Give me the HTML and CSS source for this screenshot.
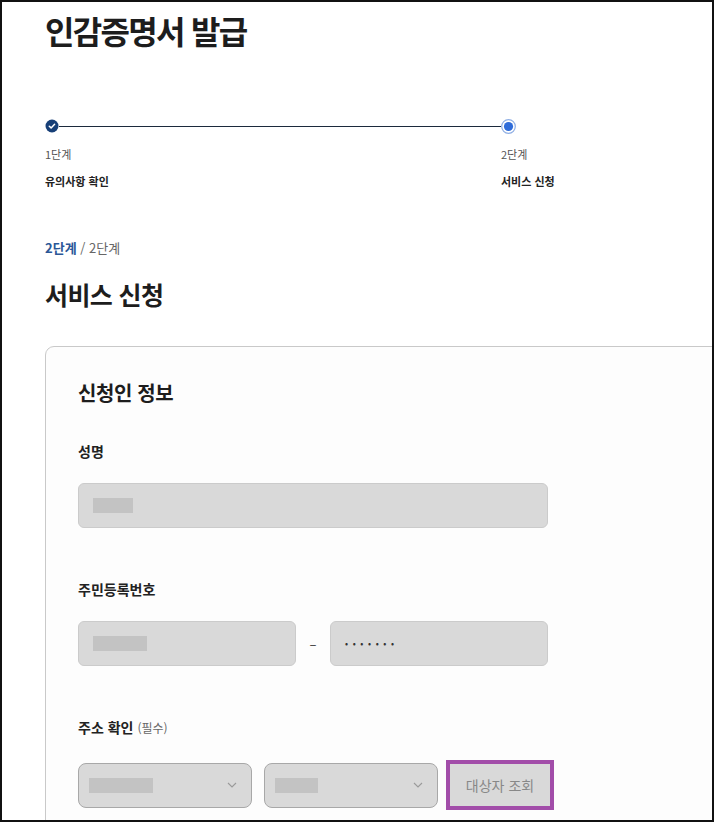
FILE: index.html
```html
<!DOCTYPE html>
<html lang="ko">
<head>
    <meta charset="UTF-8">
    <meta name="viewport" content="width=device-width, initial-scale=1.0">
    <title>인감증명서 발급</title>
    <link rel="stylesheet" href="styles.css">
</head>
<body>
    <div class="page">
        <h1 class="page-title">인감증명서 발급</h1>

        <!-- Step indicator -->
        <div class="steps">
            <div class="step done">
                <div class="step-track">
                    <svg class="dot" width="14" height="14" viewBox="0 0 14 14">
                        <circle cx="7" cy="7" r="6.5" fill="#173f77"/>
                        <path d="M4.3 7.2 L6.1 8.9 L9.6 5.3" fill="none" stroke="#fff" stroke-width="1.5" stroke-linecap="round" stroke-linejoin="round"/>
                    </svg>
                    <span class="line"></span>
                </div>
                <div class="step-num">1단계</div>
                <div class="step-name">유의사항 확인</div>
            </div>
            <div class="step current">
                <div class="step-track">
                    <svg class="dot" width="15" height="15" viewBox="0 0 15 15">
                        <circle cx="7.5" cy="7.5" r="6.8" fill="#fff" stroke="#8eaee4" stroke-width="1.2"/>
                        <circle cx="7.5" cy="7.5" r="4.6" fill="#2f6cd9"/>
                    </svg>
                </div>
                <div class="step-num">2단계</div>
                <div class="step-name">서비스 신청</div>
            </div>
        </div>

        <div class="step-count"><strong>2단계</strong> / 2단계</div>
        <h2 class="section-title">서비스 신청</h2>

        <!-- Applicant form -->
        <div class="card">
            <h3 class="card-title">신청인 정보</h3>

            <div class="field">
                <div class="field-label">성명</div>
                <div class="input wide"><span class="mask mask-name"></span></div>
            </div>

            <div class="field">
                <div class="field-label">주민등록번호</div>
                <div class="rrn-row">
                    <div class="input half"><span class="mask mask-rrn"></span></div>
                    <span class="dash">–</span>
                    <div class="input half"><span class="secret">•••••••</span></div>
                </div>
            </div>

            <div class="field">
                <div class="field-label">주소 확인 <span class="note">(필수)</span></div>
                <div class="address-row">
                    <div class="select">
                        <span class="mask mask-sido"></span>
                        <svg class="chevron" width="10" height="6" viewBox="0 0 10 6"><path d="M1 1 L5 5 L9 1" fill="none" stroke="#9a9a9a" stroke-width="1.1"/></svg>
                    </div>
                    <div class="select">
                        <span class="mask mask-gu"></span>
                        <svg class="chevron" width="10" height="6" viewBox="0 0 10 6"><path d="M1 1 L5 5 L9 1" fill="none" stroke="#9a9a9a" stroke-width="1.1"/></svg>
                    </div>
                    <button class="search-btn" disabled>대상자 조회</button>
                </div>
            </div>
        </div>
    </div>
</body>
</html>
```

FILE: styles.css
```css
body {
    margin: 0;
    font-family: "Noto Sans CJK KR", "Noto Sans", sans-serif;
    color: #1e1e1e;
    background-color: #fff;
}

.page {
    width: 714px;
    height: 822px;
    box-sizing: border-box;
    border: 2px solid #111;
    padding: 7px 0 0 43px;
    overflow: hidden;
}

.page-title {
    margin: 0;
    font-size: 32px;
    line-height: 42px;
    font-weight: 700;
    letter-spacing: -1.7px;
    color: #1d1d1d;
}

/* steps */
.steps {
    display: flex;
    margin-top: 68px;
}

.step {
    flex-shrink: 0;
    width: 456px;
}

.step-track {
    display: flex;
    align-items: center;
    height: 14px;
}

.step-track .line {
    flex: 1;
    height: 1px;
    background-color: #1c2a3c;
}

.step-num {
    margin-top: 12px;
    font-size: 11px;
    line-height: 18px;
    color: #555;
}

.step-name {
    margin-top: 9px;
    font-size: 11px;
    line-height: 18px;
    font-weight: 700;
    color: #222;
}

.step-count {
    margin-top: 48px;
    font-size: 13px;
    line-height: 20px;
    color: #666;
}

.step-count strong {
    color: #2b5797;
}

.section-title {
    margin: 18px 0 0;
    font-size: 25px;
    line-height: 36px;
    font-weight: 700;
    letter-spacing: -0.6px;
    color: #1d1d1d;
}

/* card */
.card {
    margin-top: 34px;
    width: 720px;
    height: 600px;
    box-sizing: border-box;
    border: 1px solid #c9c9c9;
    border-radius: 9px;
    background-color: #fdfdfd;
    padding: 31px 0 0 32px;
}

.card-title {
    margin: 0;
    font-size: 20px;
    line-height: 30px;
    font-weight: 700;
    letter-spacing: -0.4px;
    color: #1d1d1d;
}

.field {
    margin-top: 33px;
}

.field + .field {
    margin-top: 51px;
}

.field-label {
    font-size: 14px;
    line-height: 20px;
    font-weight: 700;
    color: #222;
    margin-bottom: 22px;
}

.field-label .note {
    font-size: 12px;
    font-weight: 400;
    color: #666;
}

.input {
    display: flex;
    align-items: center;
    height: 45px;
    box-sizing: border-box;
    border: 1px solid #cbcbcb;
    border-radius: 6px;
    background-color: #d9d9d9;
    padding-left: 14px;
}

.input.wide {
    width: 470px;
}

.input.half {
    width: 218px;
}

.mask {
    display: block;
    height: 15px;
    background-color: #c3c3c3;
}

.mask-name { width: 40px; }
.mask-rrn { width: 54px; }
.mask-sido { width: 64px; }
.mask-gu { width: 43px; }

.rrn-row {
    display: flex;
    align-items: center;
}

.dash {
    width: 34px;
    text-align: center;
    font-size: 13px;
    color: #333;
}

.secret {
    font-size: 9px;
    letter-spacing: 4.6px;
    color: #333;
}

.address-row {
    display: flex;
    align-items: center;
}

.select {
    display: flex;
    align-items: center;
    justify-content: space-between;
    width: 174px;
    height: 45px;
    box-sizing: border-box;
    border: 1px solid #a8a8a8;
    border-radius: 8px;
    background-color: #d9d9d9;
    padding: 0 14px 0 10px;
    margin-right: 12px;
}

.select + .select {
    margin-right: 8px;
}

.search-btn {
    width: 108px;
    height: 50px;
    box-sizing: border-box;
    border: 4px solid #a24da9;
    background-color: #d9d9d9;
    font-family: inherit;
    font-size: 14px;
    color: #888;
    padding: 0;
}
```
